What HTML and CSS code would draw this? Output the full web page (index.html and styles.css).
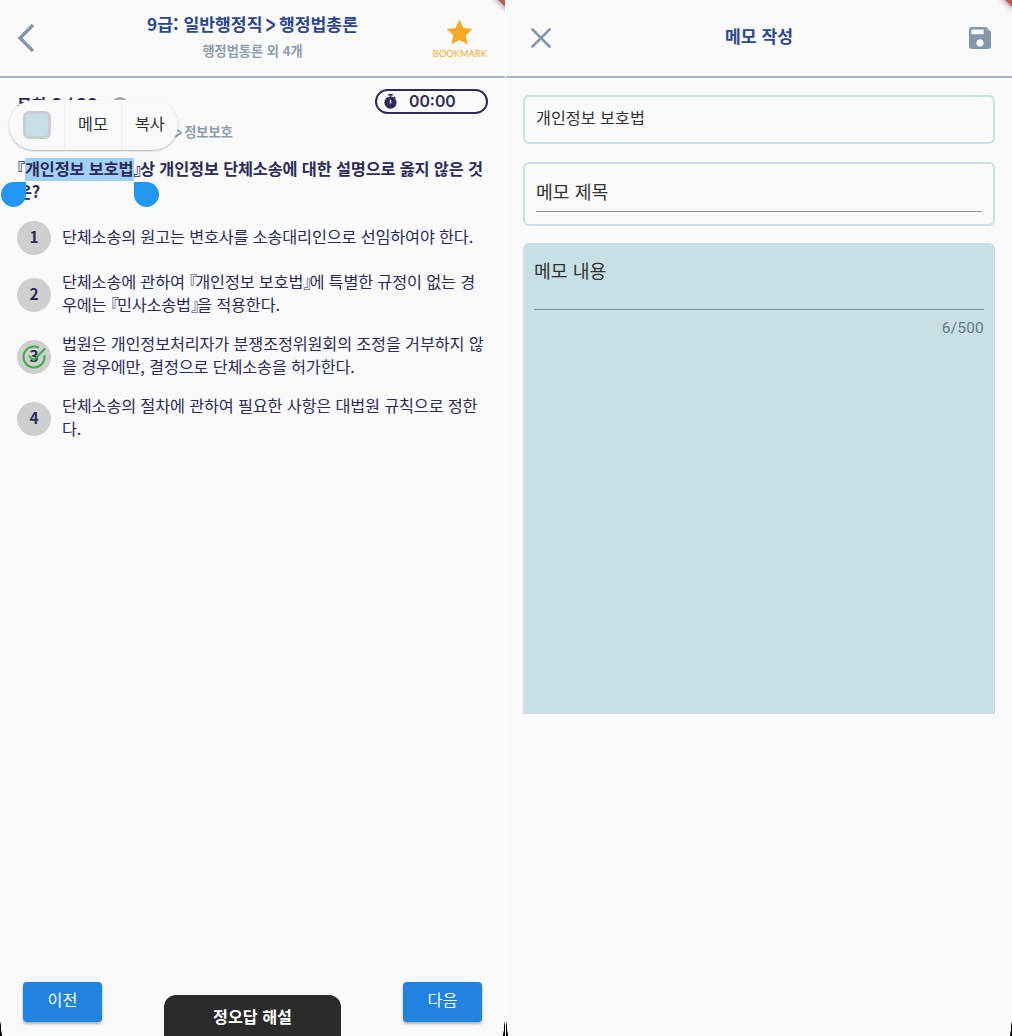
FILE: index.html
```html
<!DOCTYPE html>
<html lang="ko">
<head>
<meta charset="utf-8">
<title>메모 작성</title>
<link rel="stylesheet" href="styles.css">
</head>
<body>
<main class="screens">
  <section class="screen quiz">
    <header class="bar">
      <svg class="back" viewBox="0 0 18 30"><path d="M16 2 3 15l13 13"/></svg>
      <div class="heading">
        <h1>9급: 일반행정직 <span class="gt">&gt;</span> 행정법총론</h1>
        <p>행정법통론 외 4개</p>
      </div>
      <div class="bookmark">
        <svg viewBox="0 0 26 26"><path d="M13 1.600 16.400 9.200 24.400 10 18.400 15.500 20.200 23.600 13 19.500 5.800 23.600 7.600 15.500 1.600 10 9.600 9.200Z"/></svg>
        <span>BOOKMARK</span>
      </div>
    </header>
    <div class="content">
      <div class="status">
        <span class="count">문항 <span class="num">2 / 20</span></span><i class="help"></i>
        <div class="timer">
          <svg viewBox="0 0 14 16"><path class="fill" d="M4.500 0h5v1.600h-5zM6.200 1h1.600v2H6.200zM11.300 2.400l1.300 1.300-1 1-1.300-1.300z"/><circle class="fill" cx="7" cy="9.200" r="6.600"/><path class="hand" d="M7 6v4"/></svg>
          <span>00:00</span>
        </div>
      </div>
      <p class="crumb"><span class="gt">&gt;</span> 정보보호</p>
      <h2 class="question">『<span class="selected">개인정보 보호법</span><span class="close-quote">』</span>상 개인정보 단체소송에 대한 설명으로 옳지 않은 것<br>은?</h2>
      <ol class="options">
        <li><b>1</b><span>단체소송의 원고는 변호사를 소송대리인으로 선임하여야 한다.</span></li>
        <li><b>2</b><span>단체소송에 관하여 <span class="close-quote">『</span>개인정보 보호법<span class="close-quote">』</span>에 특별한 규정이 없는 경<br>우에는 <span class="close-quote">『</span>민사소송법<span class="close-quote">』</span>을 적용한다.</span></li>
        <li><b>3<svg class="check" viewBox="0 0 24 24"><path d="M22.500 11v1a10.500 10.500 0 1 1-6.200-9.600M7.400 11.300l4.300 4L22.500 4"/></svg></b><span>법원은 개인정보처리자가 분쟁조정위원회의 조정을 거부하지 않<br>을 경우에만, 결정으로 단체소송을 허가한다.</span></li>
        <li><b>4</b><span>단체소송의 절차에 관하여 필요한 사항은 대법원 규칙으로 정한<br>다.</span></li>
      </ol>
    </div>
    <footer class="actions">
      <button class="nav">이전</button>
      <button class="explain">정오답 해설</button>
      <button class="nav">다음</button>
    </footer>
    <div class="popup"><span class="cell"><i class="swatch"></i></span><span class="cell">메모</span><span class="cell last">복사</span></div>
  </section>
  <section class="screen memo">
    <header class="bar">
      <svg class="close" viewBox="0 0 20 20"><path d="M1.500 1.500l17 17M18.500 1.500l-17 17"/></svg>
      <h1>메모 작성</h1>
      <svg class="save" viewBox="3 3 18 18"><path d="M17 3H5c-1.110 0-2 .9-2 2v14c0 1.100.89 2 2 2h14c1.100 0 2-.9 2-2V7l-4-4zm-5 16c-1.660 0-3-1.340-3-3s1.340-3 3-3 3 1.340 3 3-1.340 3-3 3zm3-10H5V5h10v4z"/></svg>
    </header>
    <div class="form">
      <div class="quote">개인정보 보호법</div>
      <div class="title-field"><div class="line">메모 제목</div></div>
      <div class="body-field"><div class="line">메모 내용</div><p>6/500</p></div>
    </div>
  </section>
</main>
</body>
</html>
```
FILE: styles.css
```css
* { box-sizing: border-box; }
body, h1, h2, p, ol { margin: 0; padding: 0; }
body {
  background: #fff;
  font-family: "Noto Sans CJK KR", sans-serif;
  font-feature-settings: "halt";
  color: #2e2a5c;
}
.screens { display: grid; grid-template-columns: 505px 506px; gap: 1px; height: 1036px; }
.screen { position: relative; overflow: hidden; display: flex; flex-direction: column; background: #fafafa; }
/* ribbon corner at the top right */
.screen::before {
  content: ""; position: absolute; right: -9px; top: -8px; width: 18px; height: 12px;
  background: #c9504f; transform: rotate(45deg); box-shadow: 0 0 6px rgba(0,0,0,.6);
}
/* rounded device corners */
.screen::after {
  content: ""; position: absolute; inset: auto 0 0 0; height: 22px; pointer-events: none;
  background:
    linear-gradient(to top right, #000 42%, transparent 54%) left bottom / 2px 18px no-repeat,
    linear-gradient(to top left, #000 42%, transparent 54%) right bottom / 2px 18px no-repeat;
}
.bar { display: flex; align-items: center; justify-content: space-between; height: 78px; border-bottom: 2px solid #a9b5c5; }
.bar h1 { font-size: 17.2px; line-height: 24px; font-weight: 700; color: #2b4793; }
svg { display: block; fill: none; }
.back { width: 18px; height: 30px; margin-left: 17px; stroke: #8497ad; stroke-width: 3.4; }
.quiz .bar { display: grid; grid-template-columns: 90px 1fr 90px; }
.heading { text-align: center; padding-bottom: 3px; }
.heading p { font-size: 13.2px; line-height: 20px; font-weight: 700; color: #8c9db0; margin-top: 5px; }
.gt { display: inline-block; font-weight: 500; line-height: 1; transform: scale(1, 1.7); margin: 0 -1.5px; }
.bookmark { display: flex; flex-direction: column; align-items: center; justify-self: end; margin: 3px 18px 0 0; color: #f9a826; }
.bookmark svg { width: 27px; height: 27px; fill: currentColor; stroke: currentColor; stroke-width: 1; stroke-linejoin: round; }
.bookmark span { font: 400 9.2px/14px Lato, sans-serif; margin-top: 1px; letter-spacing: .1px; }
.content { flex: 1; padding: 10px 17px 0; }
.status { display: flex; align-items: center; height: 26px; }
.count { width: 84px; font-size: 16.3px; font-weight: 700; line-height: 26px; padding-top: 5px; margin-left: 0; white-space: nowrap; }
.num { position: relative; top: -1px; font: 700 16.6px/20px Inter, sans-serif; }
.help { width: 16px; height: 16px; border-radius: 50%; background: #aaa; margin: 8px 0 0 11px; }
.timer { display: flex; align-items: center; width: 113px; height: 25px; margin-left: auto; border: 2px solid #2e2a5c; border-radius: 13px; padding-left: 7px; font: 600 15.8px/21px Inter, sans-serif; }
.timer svg { width: 13px; height: 15px; margin-right: 12px; }
.timer .fill { fill: #2e2a5c; }
.timer .hand { stroke: #fafafa; stroke-width: 1.5; }
.crumb { margin: 8px 0 0 159px; font-size: 13.2px; line-height: 20px; font-weight: 700; color: #8c9db0; }
.question { font-size: 16.35px; line-height: 22.5px; font-weight: 700; letter-spacing: -.18px; margin-top: 15px; white-space: nowrap; position: relative; z-index: 0; }
.close-quote { letter-spacing: -2px; }
.question .close-quote { letter-spacing: -1.500px; }
.selected { position: relative; }
.selected::before { content: ""; position: absolute; z-index: -1; inset: 2px -1px -1px 0; background: #a1d1f8; }
.question::before, .question::after { content: ""; position: absolute; width: 25px; height: 25px; top: 25px; background: #2196f3; }
.question::before { left: -16px; border-radius: 50% 0 50% 50%; z-index: 1; }
.question::after { left: 117px; border-radius: 0 50% 50% 50%; }
.options { list-style: none; display: flex; flex-direction: column; gap: 17px; margin-top: 19px; }
.options li { display: flex; align-items: center; gap: 11px; min-height: 34px; font-size: 16.3px; line-height: 22.5px; letter-spacing: -.18px; white-space: nowrap; }
.options li > span { margin: -2px 0 2px; }
.options b { position: relative; flex: none; width: 34px; height: 34px; border-radius: 50%; background: #cfcfcf; text-align: center; font-size: 15.5px; line-height: 30px; }
.check { position: absolute; left: 5px; top: 5px; width: 24px; height: 24px; stroke: #3fae49; stroke-width: 2.1; stroke-linecap: round; }
.actions { display: flex; justify-content: space-between; align-items: flex-end; padding: 0 23px; }
button { border: 0; padding: 0; color: #fff; font-family: inherit; }
.nav { width: 79px; height: 40px; margin-bottom: 14px; border-radius: 4px; background: #2183e0; box-shadow: 0 2px 3px rgba(0,0,0,.3); font-size: 16.2px; padding-bottom: 6px; }
.explain { width: 177px; height: 41px; border-radius: 12px 12px 0 0; background: #2b2b2b; font-size: 16.2px; font-weight: 700; }
.popup { position: absolute; z-index: 2; left: 9px; top: 100px; width: 169px; height: 50px; display: flex; border-radius: 25px; background: #fafafa; box-shadow: 0 1px 2px rgba(0,0,0,.28); color: #333; font-size: 16.2px; line-height: 47px; }
.cell { width: 56.5px; border-right: 1px solid #f0f0f0; text-align: center; }
.cell.last { border: 0; }
.swatch { display: block; width: 28px; height: 28px; margin: 11px 0 0 14px; border: 3px solid #c7cfd6; border-radius: 6px; background: #c7e0e6; }
.close { width: 20px; height: 20px; margin-left: 25px; stroke: #8497ad; stroke-width: 2.6; stroke-linecap: round; }
.memo .bar h1 { padding: 0 2px 4px 0; }
.save { width: 22px; height: 22px; margin-right: 21px; fill: #8497ad; }
.form { padding: 17px 17px 0; color: #333; display: flex; flex-direction: column; }
.quote { height: 49px; border: 2px solid #c7e0e6; border-radius: 6px; padding-left: 11px; font-size: 16.2px; line-height: 41px; }
.title-field { height: 64px; margin-top: 17.500px; border: 2px solid #c7e0e6; border-radius: 6px; padding: 7px 11px 0; }
.line { font-size: 18.3px; border-bottom: 1px solid #8e9393; }
.title-field .line { line-height: 40px; }
.body-field { height: 471px; margin-top: 17px; padding: 10px 11px 0; background: #c7e0e6; border-radius: 6px 6px 0 0; }
.body-field .line { line-height: 34px; height: 57px; border-color: #7e9195; }
.body-field p { text-align: right; font: 15.5px/18px Roboto, sans-serif; margin-top: 9px; color: #68777b; letter-spacing: .2px; }
```
